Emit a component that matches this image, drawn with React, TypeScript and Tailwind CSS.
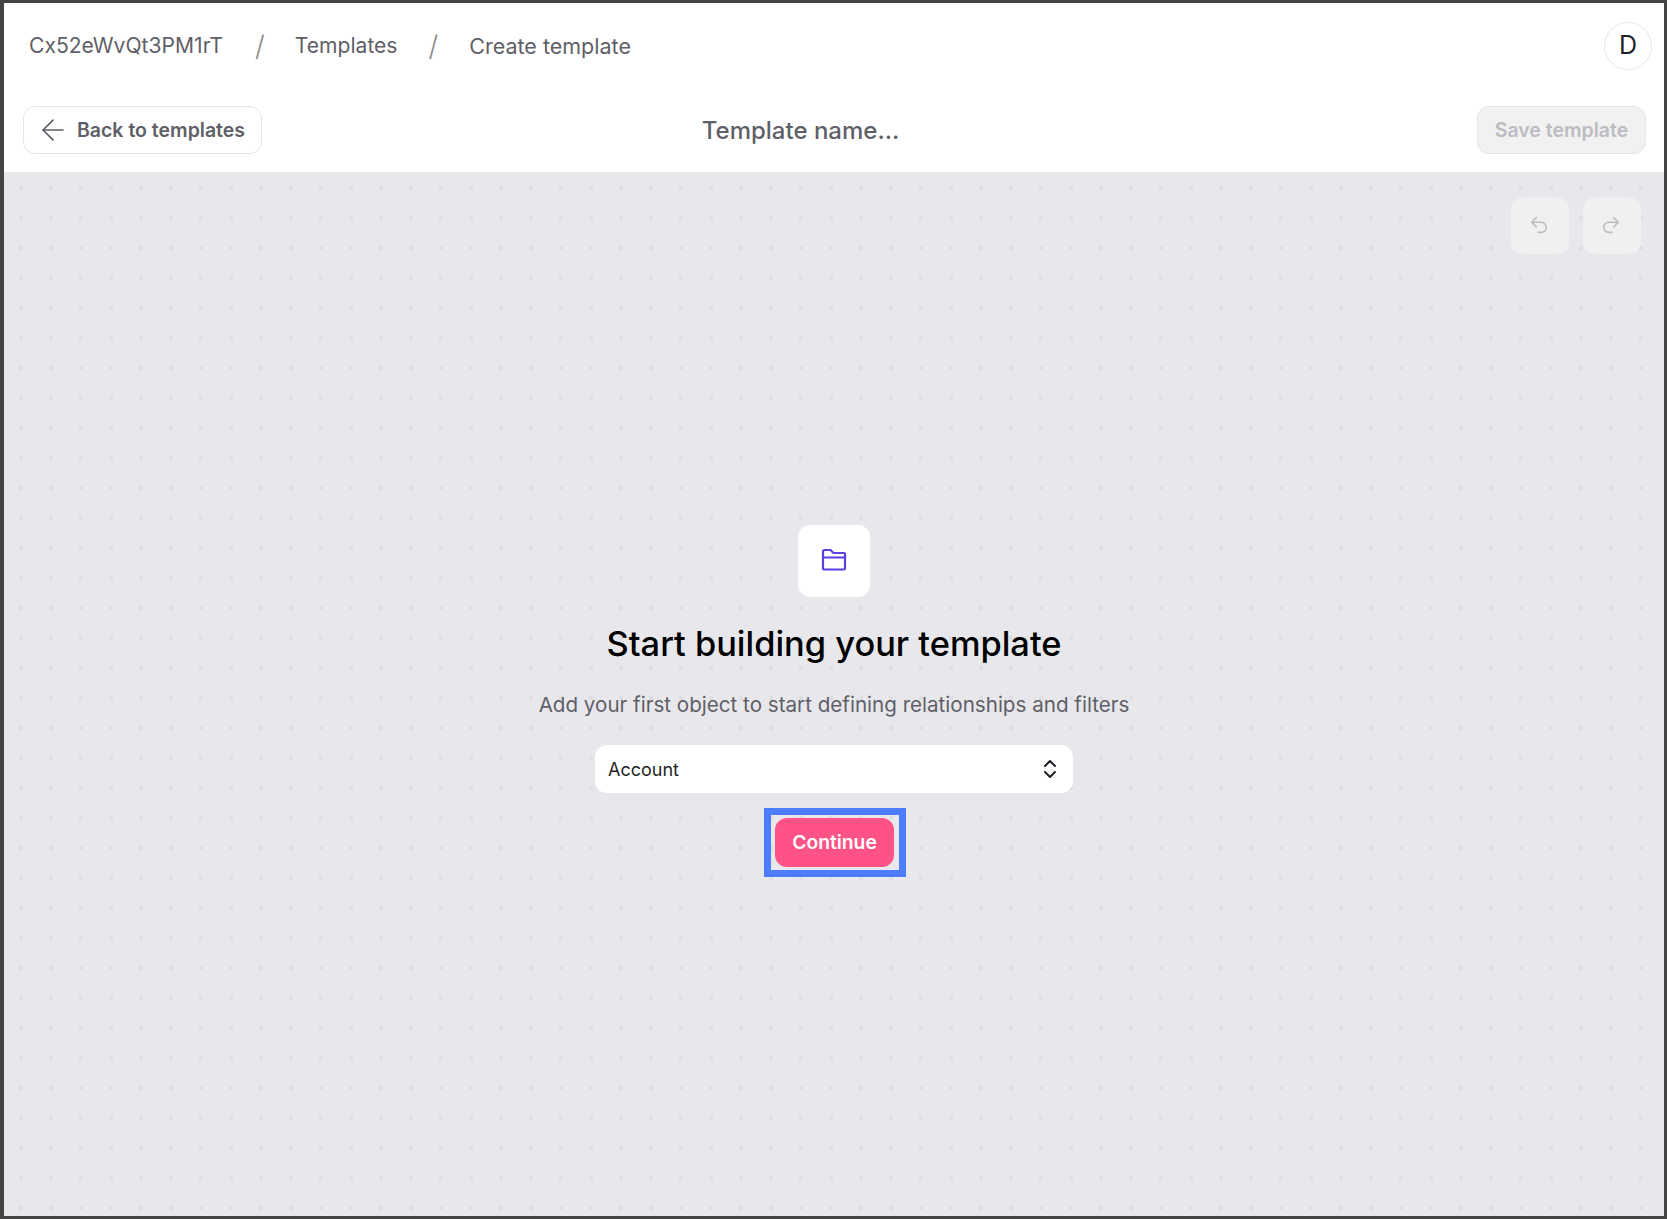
import React from 'react';
import { ArrowLeft, ChevronsUpDown, Redo2, Undo2 } from 'lucide-react';

function FolderIcon() {
  return (
    <svg width="26" height="24" viewBox="0 0 26 24" fill="none" stroke="#5b3fe0" strokeWidth="2.2" strokeLinejoin="round" strokeLinecap="round" className="-mt-[2px]">
      <path d="M2 3.5C2 2.7 2.6 2 3.5 2H9.5L12.5 5H23C23.6 5 24 5.4 24 6V20.5C24 21.1 23.6 21.5 23 21.5H3.5C2.6 21.5 2 20.9 2 20V3.5Z" />
      <path d="M2 9.5H24" />
    </svg>
  );
}

export default function App() {
  const font = { fontFamily: 'Inter, "Liberation Sans", sans-serif' };

  return (
    <div style={font} className="flex h-[1219px] flex-col border-t-[3px] border-r-[3px] border-b-[3px] border-l-[4px] border-[#444444] bg-white">
      {/* Breadcrumb */}
      <div className="flex h-[85px] shrink-0 items-center justify-between pr-[12px] pl-[25px]">
        <div className="mt-[1px] flex items-center text-[21.1px] text-[#5f5f68]">
          <span>Cx52eWvQt3PM1rT</span>
          <span className="mr-[30px] ml-[32px] text-[28px] font-light text-[#8a8a90]">/</span>
          <span>Templates</span>
          <span className="mr-[31px] ml-[31px] text-[28px] font-light text-[#8a8a90]">/</span>
          <span className="text-[21.5px]">Create template</span>
        </div>
        <div className="flex h-[48px] w-[48px] items-center justify-center rounded-full border border-[#e8e8ea] text-[25px] text-[#1f1f26]">
          D
        </div>
      </div>

      {/* Toolbar */}
      <div className="flex h-[84px] shrink-0 items-start justify-between pt-[18px] pr-[18px] pl-[19px]">
        <button className="flex h-[48px] w-[239px] items-center justify-center gap-[7px] rounded-[12px] border border-[#e2e5f0] text-[19.5px] font-semibold text-[#5f5f68]">
          <ArrowLeft size={34} strokeWidth={1.2} className="-ml-[4px]" />
          <span className="mt-[1px]">Back to templates</span>
        </button>
        <div className="mt-[7px] mr-[138px] text-[24px] font-medium text-[#5f5f68]">Template name...</div>
        <button className="h-[48px] w-[169px] rounded-[12px] border border-[#e6e6e8] bg-[#f1f1f2] pt-[1px] text-[19.5px] font-semibold text-[#bcbcc2]">
          Save template
        </button>
      </div>

      {/* Canvas */}
      <div className="flex flex-1 flex-col bg-[#e8e8ec] bg-[radial-gradient(circle,#dedee2_2px,transparent_2.5px)] bg-[size:30px_30px] bg-[position:2px_1px]">
        <div className="flex justify-end gap-[14px] pt-[25px] pr-[23px]">
          <button className="flex h-[57px] w-[58px] items-center justify-center rounded-[12px] bg-[#f0f0f1] text-[#bcbcc0]">
            <Undo2 size={22} strokeWidth={1.75} className="-mt-[2px] -ml-[2px]" />
          </button>
          <button className="flex h-[57px] w-[58px] items-center justify-center rounded-[12px] bg-[#f0f0f1] text-[#bcbcc0]">
            <Redo2 size={22} strokeWidth={1.75} className="-mt-[2px] -ml-[2px]" />
          </button>
        </div>

        <div className="mt-[271px] flex flex-col items-center">
          <div className="flex h-[72px] w-[72px] items-center justify-center rounded-[12px] bg-white">
            <FolderIcon />
          </div>
          <h1 className="mt-[25px] text-[34.4px] leading-[44px] font-medium text-black">Start building your template</h1>
          <p className="mt-[24px] text-[20.6px] leading-[30px] text-[#5f5f68]">
            Add your first object to start defining relationships and filters
          </p>
          <div className="mt-[25px] flex h-[48px] w-[478px] items-center justify-between rounded-[12px] bg-white pr-[11px] pl-[13px] text-[18px] text-[#1f1f26]">
            Account
            <ChevronsUpDown size={24} strokeWidth={2} />
          </div>
          <div className="mt-[15px] ml-[1px] flex h-[69px] w-[142px] items-center justify-center border-[7px] border-[#4d7cff]">
            <button className="h-[49px] w-[119px] rounded-[12px] bg-[#ff5286] text-[19.3px] font-semibold text-white">
              Continue
            </button>
          </div>
        </div>
      </div>
    </div>
  );
}
